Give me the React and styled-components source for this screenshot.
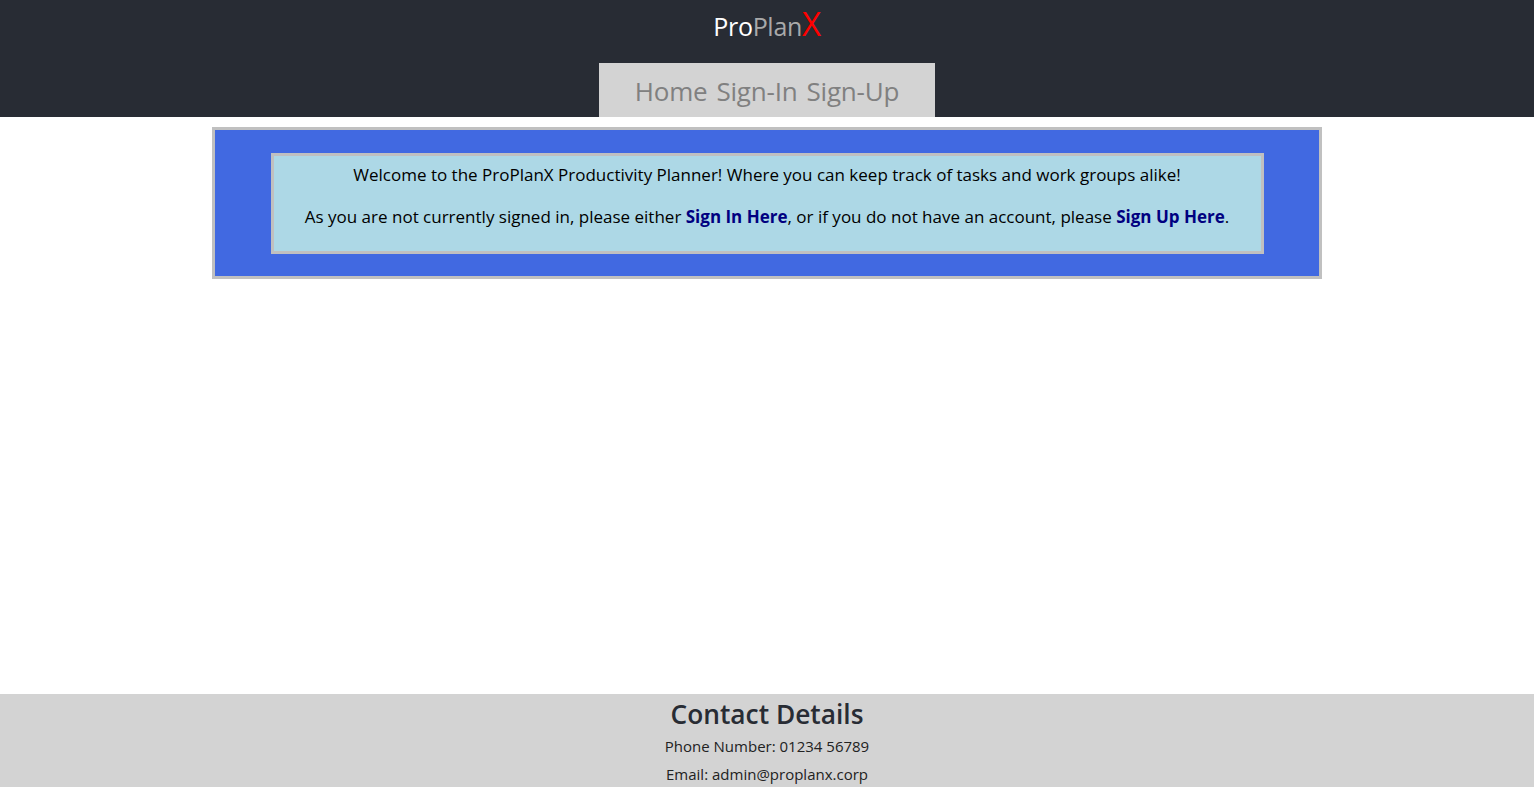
import React from "react";
import styled, { createGlobalStyle } from "styled-components";

const GlobalStyle = createGlobalStyle`
  html, body {
    margin: 0;
    padding: 0;
    background: #fff;
    font-family: "Segoe UI", "Open Sans", "Noto Sans", sans-serif;
  }
`;

const Page = styled.div`
  display: flex;
  flex-direction: column;
  min-height: 100vh;
`;

const Header = styled.header`
  background-color: #282c34;
  display: flex;
  flex-direction: column;
  align-items: center;
  height: 117px;
  box-sizing: border-box;
  padding-top: 5px;
`;

const Logo = styled.h1`
  margin: 0;
  height: 58px;
  font-size: 25px;
  font-weight: 400;
  line-height: 38px;
  letter-spacing: -0.3px;
`;

const LogoPart = styled.span`
  color: ${(p) => p.$color};
  font-size: ${(p) => p.$size || "inherit"};
`;

const Nav = styled.nav`
  display: flex;
  gap: 9px;
  background-color: #d3d3d3;
  padding: 0 36px;
  height: 54px;
  align-items: center;
  box-sizing: border-box;
`;

const NavLink = styled.a`
  color: #808080;
  font-size: 26px;
  text-decoration: none;
  letter-spacing: -0.2px;
  padding-top: 2px;
`;

const Main = styled.main`
  flex: 1;
  padding-top: 10px;
`;

const OuterBox = styled.section`
  width: 1110px;
  box-sizing: border-box;
  margin: 0 auto;
  background-color: #4169e1;
  border: 3px solid #c0c0c0;
  padding: 23px 0 22px;
`;

const InnerBox = styled.div`
  width: 993px;
  box-sizing: border-box;
  margin: 0 auto;
  background-color: #add8e6;
  border: 3px solid #c0c0c0;
  padding: 7px 10px 22px;
  text-align: center;
  color: #000;
  font-size: 17px;
`;

const Para = styled.p`
  margin: 0;
  line-height: 24px;
  & + & {
    margin-top: 18px;
  }
`;

const Link = styled.a`
  color: #000080;
  font-weight: 700;
  text-decoration: none;
`;

const Footer = styled.footer`
  background-color: #d3d3d3;
  height: 93px;
  display: flex;
  flex-direction: column;
  align-items: center;
  color: #282c34;
`;

const FooterTitle = styled.h2`
  margin: 0 0 -2px;
  font-size: 26.3px;
  font-weight: 600;
  line-height: 40px;
`;

const FooterLine = styled.p`
  margin: 0;
  font-size: 15px;
  line-height: 28px;
  color: #222;
`;

export default function App() {
  return (
    <>
      <GlobalStyle />
      <Page>
        <Header>
          <Logo>
            <LogoPart $color="#ffffff">Pro</LogoPart>
            <LogoPart $color="#a9a9a9">Plan</LogoPart>
            <LogoPart $color="#ff0000" $size="33px">X</LogoPart>
          </Logo>
          <Nav>
            <NavLink href="#">Home</NavLink>
            <NavLink href="#">Sign-In</NavLink>
            <NavLink href="#">Sign-Up</NavLink>
          </Nav>
        </Header>
        <Main>
          <OuterBox>
            <InnerBox>
              <Para>
                Welcome to the ProPlanX Productivity Planner! Where you can keep track of tasks and work groups alike!
              </Para>
              <Para>
                As you are not currently signed in, please either <Link href="#">Sign In Here</Link>, or if you do not
                have an account, please <Link href="#">Sign Up Here</Link>.
              </Para>
            </InnerBox>
          </OuterBox>
        </Main>
        <Footer>
          <FooterTitle>Contact Details</FooterTitle>
          <FooterLine>Phone Number: 01234 56789</FooterLine>
          <FooterLine>Email: admin@proplanx.corp</FooterLine>
        </Footer>
      </Page>
    </>
  );
}
